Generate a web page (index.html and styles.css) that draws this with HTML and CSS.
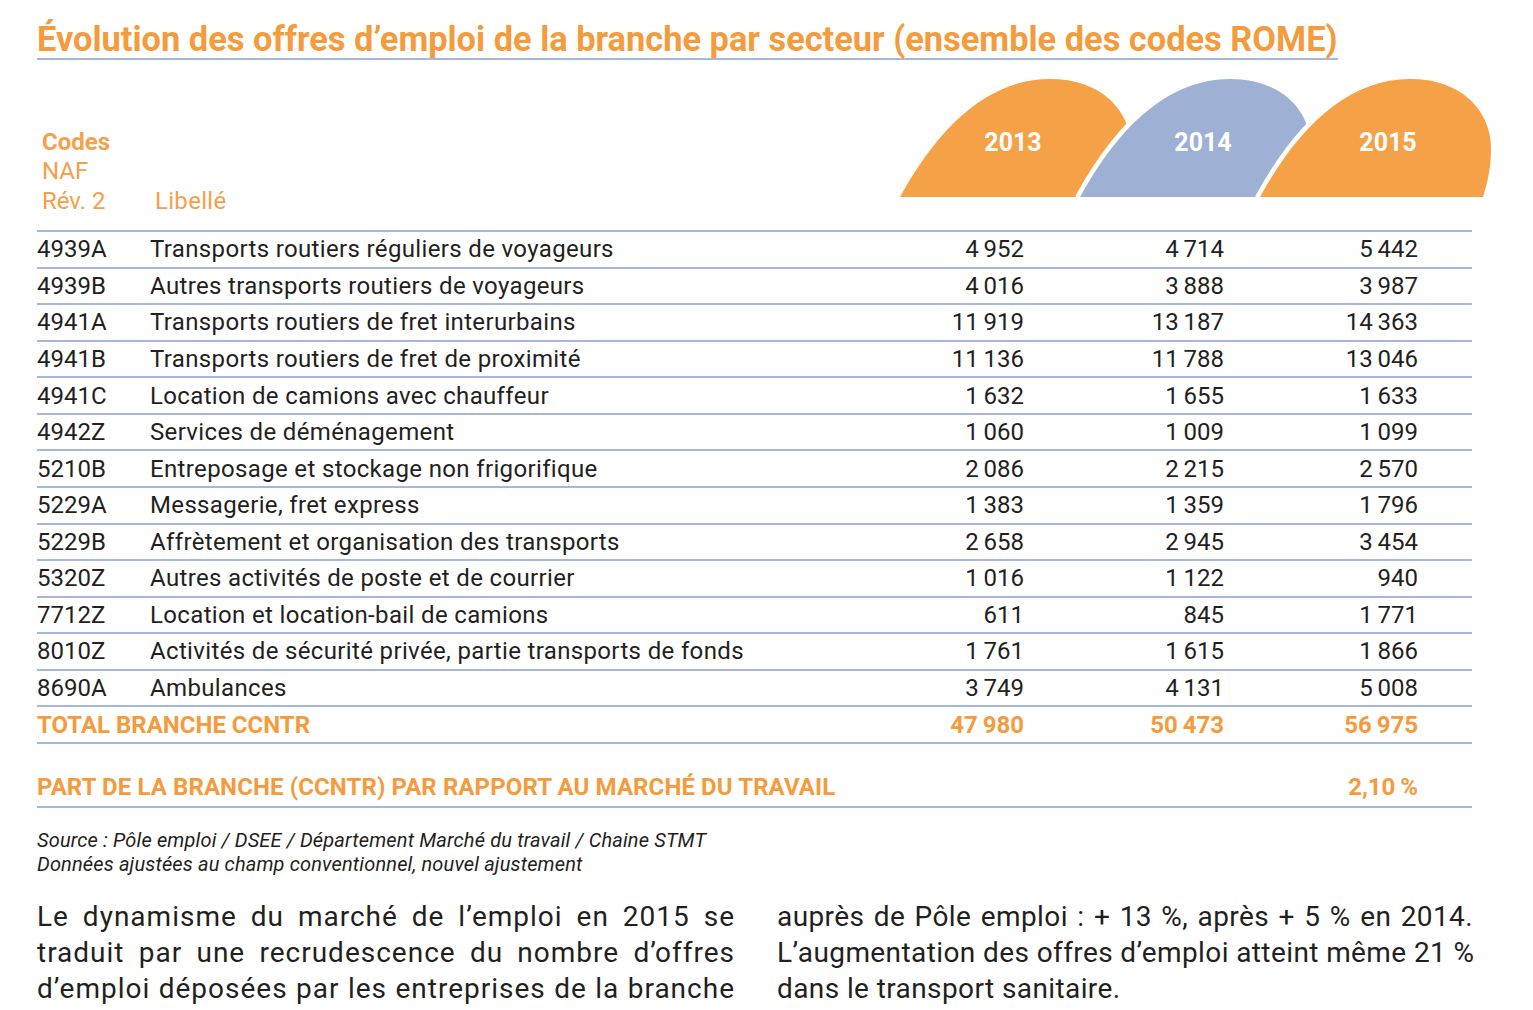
FILE: index.html
```html
<!DOCTYPE html>
<html lang="fr">
<head>
<meta charset="utf-8">
<title>Évolution des offres d'emploi</title>
<link rel="stylesheet" href="styles.css">
</head>
<body>
<main class="page">
  <h1 class="title"><span>Évolution des offres d’emploi de la branche par secteur (ensemble des codes ROME)</span></h1>

  <div class="head">
    <div class="codes">
      <b>Codes</b>
      <span>NAF</span>
      <span>Rév. 2</span>
    </div>
    <div class="libelle">Libellé</div>
    <svg class="years" width="600" height="122" viewBox="0 0 600 122">
      <g class="domes">
        <path class="dome orange" transform="translate(7,2)" d="M0,118 C40,45 90,0 150,0 C200,0 231,30 231,70 C231,90 227,105 223,118 Z"/>
        <path class="dome blue" transform="translate(187,2)" d="M0,118 C40,45 90,0 150,0 C200,0 231,30 231,70 C231,90 227,105 223,118 Z"/>
        <path class="dome orange" transform="translate(367,2)" d="M0,118 C40,45 90,0 150,0 C200,0 231,30 231,70 C231,90 227,105 223,118 Z"/>
      </g>
      <text x="120" y="74">2013</text>
      <text x="310" y="74">2014</text>
      <text x="495" y="74">2015</text>
    </svg>
  </div>

  <div class="rows">
    <div class="row"><span>4939A</span><span class="lab">Transports routiers réguliers de voyageurs</span><span>4&thinsp;952</span><span>4&thinsp;714</span><span>5&thinsp;442</span></div>
    <div class="row"><span>4939B</span><span class="lab">Autres transports routiers de voyageurs</span><span>4&thinsp;016</span><span>3&thinsp;888</span><span>3&thinsp;987</span></div>
    <div class="row"><span>4941A</span><span class="lab">Transports routiers de fret interurbains</span><span>11&thinsp;919</span><span>13&thinsp;187</span><span>14&thinsp;363</span></div>
    <div class="row"><span>4941B</span><span class="lab">Transports routiers de fret de proximité</span><span>11&thinsp;136</span><span>11&thinsp;788</span><span>13&thinsp;046</span></div>
    <div class="row"><span>4941C</span><span class="lab">Location de camions avec chauffeur</span><span>1&thinsp;632</span><span>1&thinsp;655</span><span>1&thinsp;633</span></div>
    <div class="row"><span>4942Z</span><span class="lab">Services de déménagement</span><span>1&thinsp;060</span><span>1&thinsp;009</span><span>1&thinsp;099</span></div>
    <div class="row"><span>5210B</span><span class="lab">Entreposage et stockage non frigorifique</span><span>2&thinsp;086</span><span>2&thinsp;215</span><span>2&thinsp;570</span></div>
    <div class="row"><span>5229A</span><span class="lab">Messagerie, fret express</span><span>1&thinsp;383</span><span>1&thinsp;359</span><span>1&thinsp;796</span></div>
    <div class="row"><span>5229B</span><span class="lab">Affrètement et organisation des transports</span><span>2&thinsp;658</span><span>2&thinsp;945</span><span>3&thinsp;454</span></div>
    <div class="row"><span>5320Z</span><span class="lab">Autres activités de poste et de courrier</span><span>1&thinsp;016</span><span>1&thinsp;122</span><span>940</span></div>
    <div class="row"><span>7712Z</span><span class="lab">Location et location-bail de camions</span><span>611</span><span>845</span><span>1&thinsp;771</span></div>
    <div class="row"><span>8010Z</span><span class="lab">Activités de sécurité privée, partie transports de fonds</span><span>1&thinsp;761</span><span>1&thinsp;615</span><span>1&thinsp;866</span></div>
    <div class="row"><span>8690A</span><span class="lab">Ambulances</span><span>3&thinsp;749</span><span>4&thinsp;131</span><span>5&thinsp;008</span></div>
    <div class="row total"><span class="wide">TOTAL BRANCHE CCNTR</span><span>47&thinsp;980</span><span>50&thinsp;473</span><span>56&thinsp;975</span></div>
    <div class="row part"><span class="wider">PART DE LA BRANCHE (CCNTR) PAR RAPPORT AU MARCHÉ DU TRAVAIL</span><span>2,10&thinsp;%</span></div>
  </div>

  <p class="source">Source : Pôle emploi / DSEE / Département Marché du travail / Chaine STMT<br>Données ajustées au champ conventionnel, nouvel ajustement</p>

  <div class="text">
    <p class="col wide-track">
      <span class="line">Le dynamisme du marché de l’emploi en 2015 se</span>
      <span class="line">traduit par une recrudescence du nombre d’offres</span>
      <span class="line">d’emploi déposées par les entreprises de la branche</span>
    </p>
    <p class="col">
      <span class="line">auprès de Pôle emploi : + 13 %, après + 5 % en 2014.</span>
      <span class="line">L’augmentation des offres d’emploi atteint même 21 %</span>
      <span class="line last">dans le transport sanitaire.</span>
    </p>
  </div>
</main>
</body>
</html>
```

FILE: styles.css
```css
* { box-sizing: border-box; }

html, body {
  margin: 0;
  padding: 0;
  background: #ffffff;
}

body {
  font-family: Roboto, "Liberation Sans", sans-serif;
  color: #231f20;
}

.page {
  width: 1472px;
  padding: 20px 0 0 37px;
}

.title {
  margin: 0;
  font-size: 34.4px;
  line-height: 38px;
  font-weight: 700;
  color: #f39b3d;
  letter-spacing: 0;
  white-space: nowrap;
}

.title span {
  display: inline-block;
  border-bottom: 2px solid #a5b7db;
}

.head {
  display: flex;
  align-items: flex-end;
  padding-top: 17px;
  border-bottom: 2px solid #a5b7db;
  color: #f5a04a;
  font-size: 24px;
  line-height: 29.5px;
}

.codes {
  width: 113px;
  padding-left: 5px;
  padding-bottom: 14px;
  display: flex;
  flex-direction: column;
}

.codes b { font-weight: 700; }

.libelle {
  padding-left: 5px;
  padding-bottom: 14px;
  letter-spacing: 0.3px;
}

.years {
  display: block;
  margin-left: auto;
  margin-right: -21px;
  margin-bottom: 31px;
  overflow: visible;
}

.dome {
  stroke: #ffffff;
  stroke-width: 9px;
  stroke-linejoin: round;
  paint-order: stroke;
}

.dome.orange { fill: #f5a148; }
.dome.blue { fill: #9eb1d4; }

.years text {
  fill: #ffffff;
  font-family: Roboto, "Liberation Sans", sans-serif;
  font-weight: 700;
  font-size: 25px;
  text-anchor: middle;
}

.row {
  display: grid;
  grid-template-columns: 113px 1fr 200px 200px 194px 54px;
  height: 36.57px;
  align-items: center;
  border-bottom: 2px solid #a5b7db;
  font-size: 24px;
  line-height: 34px;
  white-space: nowrap;
}

.row .lab { letter-spacing: 0.35px; }

.row span:nth-child(n+3) { text-align: right; }

.row.total {
  color: #f39b3d;
  font-weight: 700;
}

.row.total .wide {
  grid-column: 1 / 3;
  text-align: left;
}

.row.part {
  height: 64px;
  align-items: end;
  padding-bottom: 2px;
  color: #f39b3d;
  font-weight: 700;
}

.row.part .wider {
  grid-column: 1 / 5;
  text-align: left;
  letter-spacing: 0.1px;
}

.row.total span:nth-child(n+2),
.row.part span:nth-child(2) { text-align: right; }

.source {
  margin: 20px 0 0;
  font-size: 20px;
  line-height: 24px;
  font-style: italic;
  letter-spacing: 0.15px;
}

.text {
  display: grid;
  grid-template-columns: 698px 696px;
  column-gap: 42px;
  margin-top: 23px;
  font-size: 28px;
  line-height: 36px;
  letter-spacing: 0.4px;
}

.col { margin: 0; }

.col.wide-track { letter-spacing: 1px; }

.line {
  display: block;
  text-align: justify;
  text-align-last: justify;
  white-space: nowrap;
}

.line.last { text-align-last: left; }
```
